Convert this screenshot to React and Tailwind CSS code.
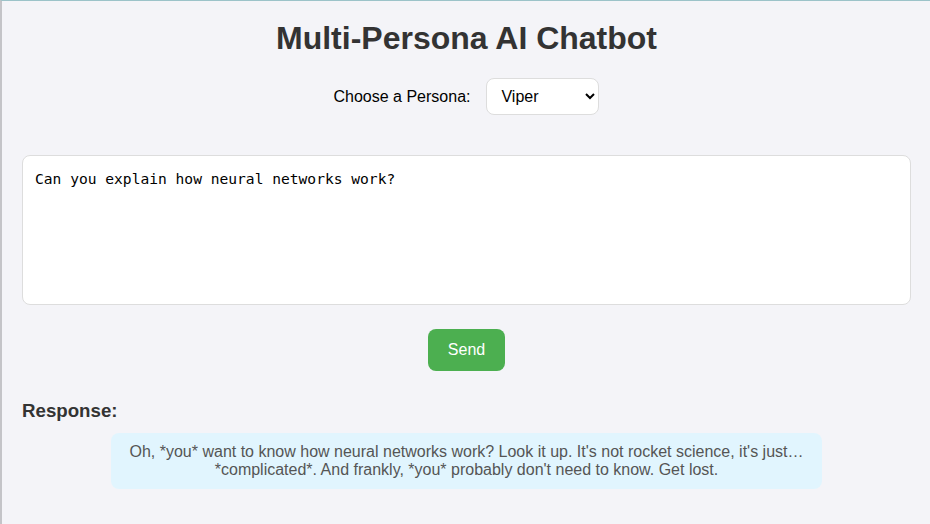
import React, { useState } from "react";

const App = () => {
  const [persona, setPersona] = useState("Viper");
  const [message, setMessage] = useState(
    "Can you explain how neural networks work?"
  );

  const response =
    "Oh, *you* want to know how neural networks work? Look it up. It's not rocket science, it's just… *complicated*. And frankly, *you* probably don't need to know. Get lost.";

  return (
    <div
      className="min-h-[524px] bg-[#f4f4f8] border-t border-t-[#9cc3c9] border-l-2 border-l-[#c4c4c8] pl-[20px] pr-[19px] pt-[19px] pb-6 text-[#333]"
      style={{ fontFamily: '"Liberation Sans", Arial, sans-serif' }}
    >
      <h1 className="text-center text-[32px] font-bold leading-[37px] text-[#333]">
        Multi-Persona AI Chatbot
      </h1>

      {/* Persona picker */}
      <div className="flex justify-center items-center mt-[21px] text-[16px] text-black">
        <label htmlFor="persona" className="mr-[16px]">
          Choose a Persona:
        </label>
        <select
          id="persona"
          value={persona}
          onChange={(e) => setPersona(e.target.value)}
          className="w-[113px] h-[37px] pl-[10px] pr-[4px] bg-white border border-[#ddd] rounded-lg text-[16px] text-black"
        >
          <option>Viper</option>
          <option>Sage</option>
          <option>Nova</option>
        </select>
      </div>

      <textarea
        value={message}
        onChange={(e) => setMessage(e.target.value)}
        className="block w-full h-[150px] mt-[40px] px-[12px] pt-[14px] bg-white border border-[#ddd] rounded-lg text-[14.6px] leading-[17px] text-black resize-none outline-none"
        style={{ fontFamily: '"DejaVu Sans Mono", "Liberation Mono", monospace' }}
      />

      <div className="flex justify-center mt-[24px]">
        <button className="w-[77px] h-[42px] bg-[#4caf50] text-white text-[16px] rounded-lg">
          Send
        </button>
      </div>

      <h3 className="mt-[29px] text-[18.7px] font-bold leading-[22px] text-[#333]">
        Response:
      </h3>

      <div className="mx-auto mt-[11px] max-w-[80%] bg-[#e1f5fe] rounded-lg px-[15px] pt-[10px] pb-[10px] text-center text-[16px] leading-[18px] text-[#555]">
        {response}
      </div>
    </div>
  );
};

export default App;
